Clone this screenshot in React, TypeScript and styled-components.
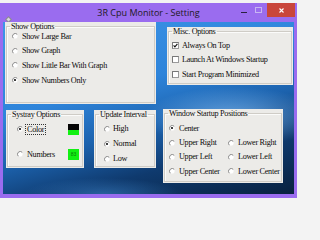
import React from "react";
import styled, { createGlobalStyle } from "styled-components";

const GlobalStyle = createGlobalStyle`
  html, body {
    margin: 0;
    padding: 0;
    background: #f3f3f3;
  }
  body {
    width: 300px;
    height: 204px;
    overflow: hidden;
    padding-top: 3px;
    box-sizing: border-box;
  }
`;

const Window = styled.div`
  width: 297px;
  height: 195px;
  background: #9a6cef;
  display: flex;
  flex-direction: column;
`;

const TitleBar = styled.div`
  height: 19px;
  display: grid;
  grid-template-columns: 1fr auto 1fr;
  align-items: start;
`;

const AppIcon = styled.div`
  margin: 6px 0 0 5px;
  width: 7px;
  height: 7px;
`;

const Title = styled.div`
  font-family: "Open Sans", "Noto Sans", sans-serif;
  font-size: 9px;
  line-height: 19px;
  color: #1d1a24;
  white-space: nowrap;
`;

const Controls = styled.div`
  display: flex;
  justify-content: flex-end;
  align-items: flex-start;
  padding-right: 2px;
`;

const MinButton = styled.div`
  width: 6px;
  height: 1px;
  background: #2a2140;
  margin: 9px 8px 0 0;
`;

const MaxButton = styled.div`
  width: 5px;
  height: 4px;
  border: 1px solid #c8b6f2;
  margin: 4px 5px 0 0;
`;

const CloseButton = styled.div`
  width: 28px;
  height: 14px;
  background: #c9463b;
  display: flex;
  align-items: center;
  justify-content: center;
`;

const Client = styled.div`
  flex: 1;
  margin: 0 3px 4px 3px;
  background:
    radial-gradient(ellipse 90px 30px at 230px 95px, rgba(150, 205, 255, 0.6), transparent),
    radial-gradient(ellipse 80px 16px at 100px 172px, rgba(60, 130, 200, 0.55), transparent),
    linear-gradient(165deg, #3e95e8 0%, #2e84da 38%, #1c62ad 58%, #0f3a6e 76%, #08213f 100%);
  display: flex;
  flex-direction: column;
`;

const Row = styled.div`
  display: flex;
  align-items: flex-start;
`;

const BottomRow = styled(Row)`
  margin-top: 5px;
`;

const Panel = styled.div<{ $w: number; $h: number }>`
  width: ${(p) => p.$w}px;
  height: ${(p) => p.$h}px;
  background: #ecebe8;
  padding: 0 1px 1px 1px;
  box-sizing: border-box;
  display: flex;
`;

const ShowPanel = styled(Panel)`
  margin-left: 2px;
`;

const MiscPanel = styled(Panel)`
  margin: 5px 0 0 11px;
`;

const SystrayPanel = styled(Panel)`
  margin: 1px 0 0 3px;
`;

const UpdatePanel = styled(Panel)`
  margin: 1px 0 0 10px;
`;

const StartupPanel = styled(Panel)`
  margin-left: 7px;
`;

const Frame = styled.fieldset`
  flex: 1;
  margin: 0;
  padding: 0;
  border: 1px solid #cfccc6;
  box-shadow: inset 1px 1px 0 #fbfbfa;
  min-width: 0;
`;

const serif = `"Liberation Serif", "Times New Roman", serif`;

const Legend = styled.legend`
  font-family: ${serif};
  font-size: 8.2px;
  letter-spacing: -0.3px;
  line-height: 9px;
  color: #0c0c0c;
  padding: 0 1px;
  margin-left: 3px;
`;

const Content = styled.div<{ $top: number; $left: number }>`
  margin-top: ${(p) => p.$top}px;
  padding-left: ${(p) => p.$left}px;
  display: flex;
  flex-direction: column;
`;

const Option = styled.div<{ $h: number; $gap?: number }>`
  height: ${(p) => p.$h}px;
  display: flex;
  align-items: center;
  gap: ${(p) => p.$gap ?? 4}px;
  font-family: ${serif};
  font-size: 8.2px;
  letter-spacing: -0.3px;
  color: #0c0c0c;
  white-space: nowrap;
`;

const SystrayOption = styled(Option)`
  padding-right: 3px;
`;

const NumbersOption = styled(SystrayOption)`
  margin-top: 11px;
`;

const FocusLabel = styled.span`
  outline: 1px dotted #333;
  padding: 0 1px;
  margin-left: -1px;
`;

const Swatch = styled.div`
  margin-left: auto;
  width: 11px;
  height: 11px;
  display: flex;
  flex-direction: column;
`;

const SwatchTop = styled.div`
  height: 6px;
  background: #050505;
`;

const SwatchBottom = styled.div`
  flex: 1;
  background: #12f012;
`;

const NumberSwatch = styled.div`
  margin-left: auto;
  width: 11px;
  height: 11px;
  background: #12f012;
  color: #0a7a0a;
  font-family: "Liberation Sans", Arial, sans-serif;
  font-size: 5px;
  letter-spacing: 0;
  display: flex;
  align-items: center;
  justify-content: center;
`;

const Grid = styled.div`
  display: grid;
  grid-template-columns: 59px auto;
`;

function Radio({ on }: { on?: boolean }) {
  return (
    <svg width="6" height="6" viewBox="0 0 6 6">
      <circle cx="3" cy="3" r="2.6" fill="#fff" />
      <path d="M5.2 1.3 A2.6 2.6 0 1 0 1.3 5.2" fill="none" stroke="#7c7c7c" strokeWidth="0.9" />
      {on && <circle cx="3" cy="3" r="1.1" fill="#111" />}
    </svg>
  );
}

function Check({ on }: { on?: boolean }) {
  return (
    <svg width="7" height="7" viewBox="0 0 7 7">
      <rect x="0.5" y="0.5" width="6" height="6" fill="#fff" stroke="#9a9a9a" />
      <path d="M0.5 6.5 V0.5 H6.5" fill="none" stroke="#777" />
      {on && <path d="M1.6 3.4 L2.9 4.8 L5.4 1.8" fill="none" stroke="#111" strokeWidth="1.1" />}
    </svg>
  );
}

export default function App(): React.ReactElement {
  return (
    <>
      <GlobalStyle />
      <Window>
        <TitleBar>
          <AppIcon>
            <svg width="7" height="7" viewBox="0 0 7 7">
              <path d="M3.5 0 L7 3.5 L3.5 7 L0 3.5 Z" fill="#8d8a94" />
              <path d="M3.5 1.5 L5.5 3.5 L3.5 5.5 L1.5 3.5 Z" fill="#d9d6de" />
            </svg>
          </AppIcon>
          <Title>3R Cpu Monitor - Setting</Title>
          <Controls>
            <MinButton />
            <MaxButton />
            <CloseButton>
              <svg width="5" height="5" viewBox="0 0 5 5">
                <path d="M0.5 0.5 L4.5 4.5 M4.5 0.5 L0.5 4.5" stroke="#fff" strokeWidth="1.1" />
              </svg>
            </CloseButton>
          </Controls>
        </TitleBar>
        <Client>
          <Row>
            <ShowPanel $w={151} $h={82}>
              <Frame>
                <Legend>Show Options</Legend>
                <Content $top={-2} $left={5}>
                  <Option $h={14.6}>
                    <Radio />
                    Show Large Bar
                  </Option>
                  <Option $h={14.6}>
                    <Radio />
                    Show Graph
                  </Option>
                  <Option $h={14.6}>
                    <Radio />
                    Show Little Bar With Graph
                  </Option>
                  <Option $h={14.6}>
                    <Radio on />
                    Show Numbers Only
                  </Option>
                </Content>
              </Frame>
            </ShowPanel>
            <MiscPanel $w={126} $h={58}>
              <Frame>
                <Legend>Misc. Options</Legend>
                <Content $top={2} $left={3}>
                  <Option $h={14.5} $gap={3}>
                    <Check on />
                    Always On Top
                  </Option>
                  <Option $h={14.5} $gap={3}>
                    <Check />
                    Launch At Windows Startup
                  </Option>
                  <Option $h={14.5} $gap={3}>
                    <Check />
                    Start Program Minimized
                  </Option>
                </Content>
              </Frame>
            </MiscPanel>
          </Row>
          <BottomRow>
            <SystrayPanel $w={78} $h={58}>
              <Frame>
                <Legend>Systray Options</Legend>
                <Content $top={3} $left={9}>
                  <SystrayOption $h={14}>
                    <Radio on />
                    <FocusLabel>Color</FocusLabel>
                    <Swatch>
                      <SwatchTop />
                      <SwatchBottom />
                    </Swatch>
                  </SystrayOption>
                  <NumbersOption $h={14}>
                    <Radio />
                    Numbers
                    <NumberSwatch>83</NumberSwatch>
                  </NumbersOption>
                </Content>
              </Frame>
            </SystrayPanel>
            <UpdatePanel $w={62} $h={58}>
              <Frame>
                <Legend>Update Interval</Legend>
                <Content $top={2} $left={8}>
                  <Option $h={15} $gap={3}>
                    <Radio />
                    High
                  </Option>
                  <Option $h={15} $gap={3}>
                    <Radio on />
                    Normal
                  </Option>
                  <Option $h={15} $gap={3}>
                    <Radio />
                    Low
                  </Option>
                </Content>
              </Frame>
            </UpdatePanel>
            <StartupPanel $w={120} $h={74}>
              <Frame>
                <Legend>Window Startup Positions</Legend>
                <Content $top={3} $left={4}>
                  <Option $h={14.4}>
                    <Radio on />
                    Center
                  </Option>
                  <Grid>
                    <Option $h={14.4}>
                      <Radio />
                      Upper Right
                    </Option>
                    <Option $h={14.4}>
                      <Radio />
                      Lower Right
                    </Option>
                    <Option $h={14.4}>
                      <Radio />
                      Upper Left
                    </Option>
                    <Option $h={14.4}>
                      <Radio />
                      Lower Left
                    </Option>
                    <Option $h={14.4}>
                      <Radio />
                      Upper Center
                    </Option>
                    <Option $h={14.4}>
                      <Radio />
                      Lower Center
                    </Option>
                  </Grid>
                </Content>
              </Frame>
            </StartupPanel>
          </BottomRow>
        </Client>
      </Window>
    </>
  );
}
